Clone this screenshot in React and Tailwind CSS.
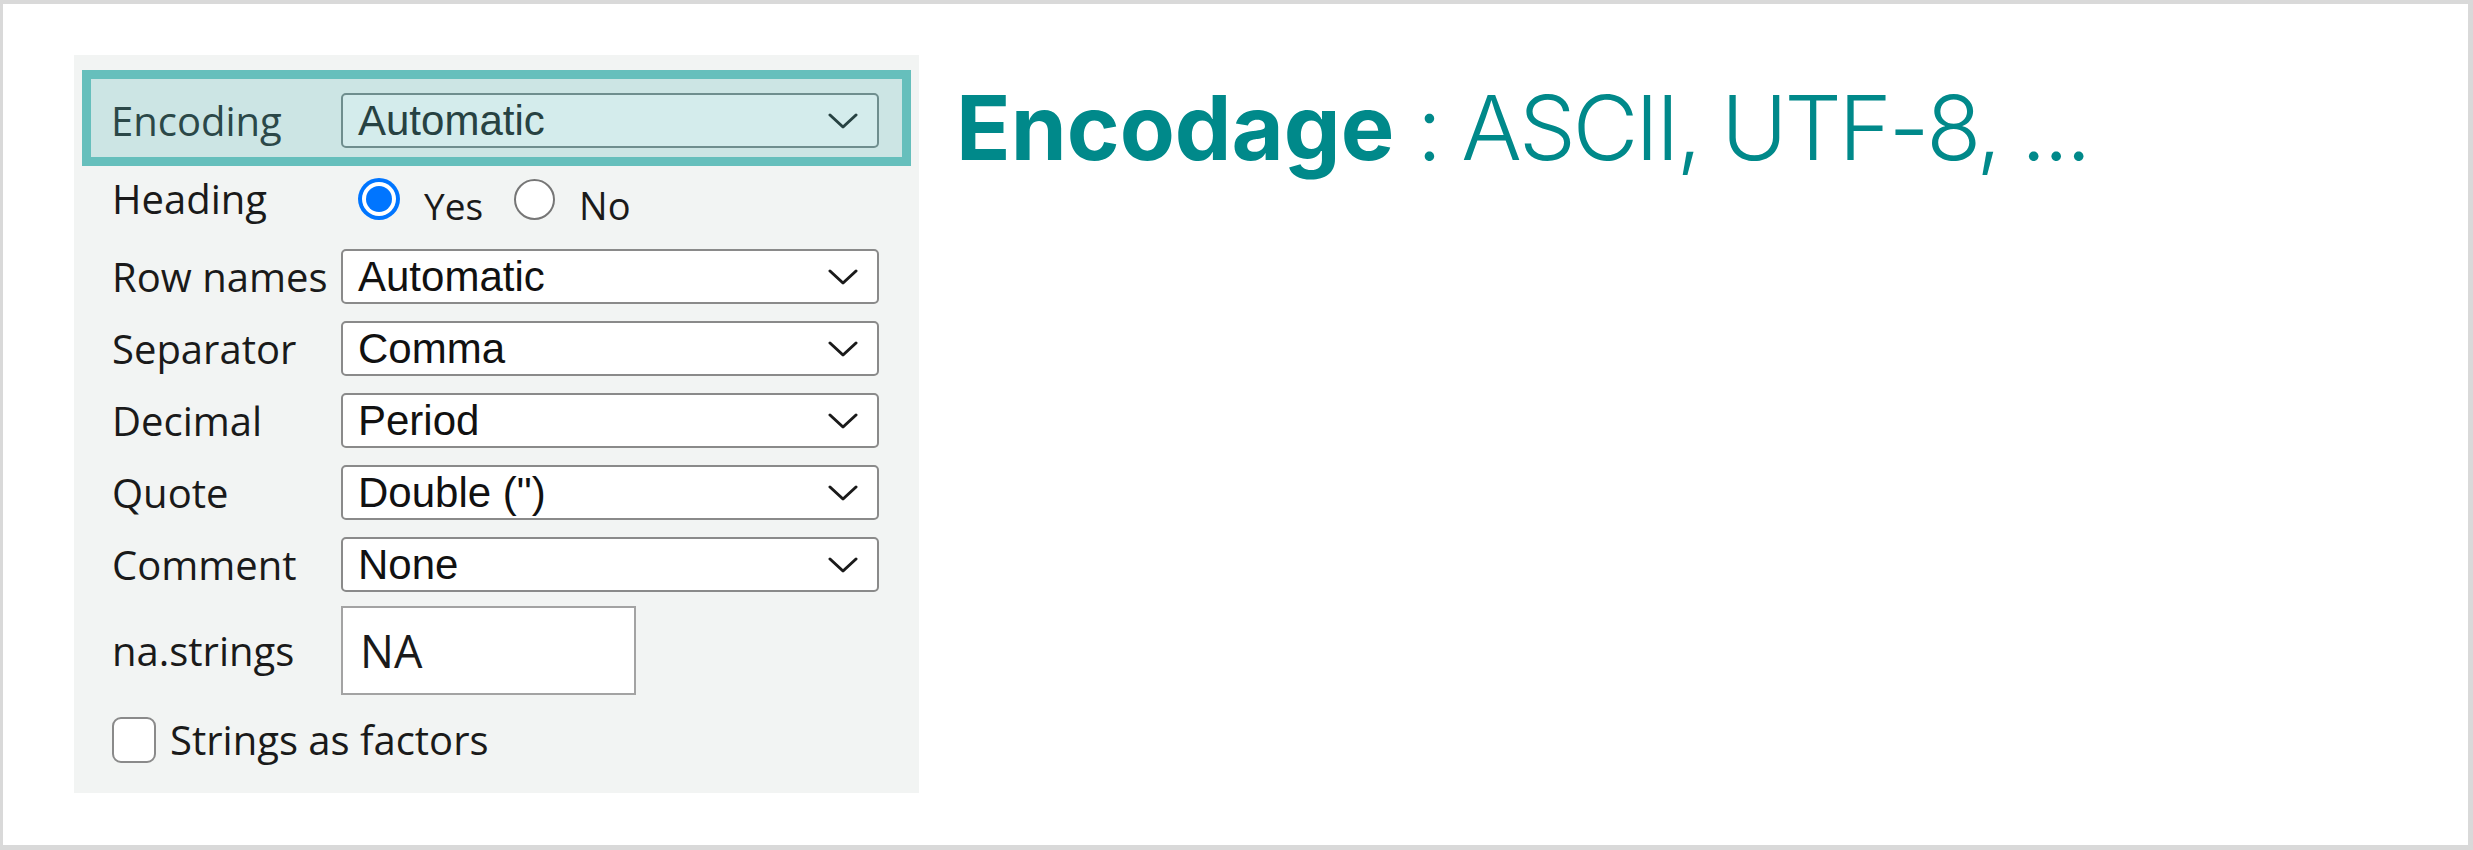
import React from "react";

const Chevron = ({ color = "#1a1a1a" }) => (
  <svg width="30" height="16" viewBox="0 0 30 16" className="shrink-0">
    <polyline points="2,2 15,14 28,2" fill="none" stroke={color} strokeWidth="3" strokeLinecap="round" strokeLinejoin="round" />
  </svg>
);

const SelectBox = ({ value, tinted }) => (
  <div
    className={`flex items-center justify-between w-[538px] h-[55px] pl-[15px] pr-[19px] rounded-[5px] border-2 ${
      tinted ? "bg-[#d4ecec] border-[#6f8e8e] text-[#274242]" : "bg-white border-[#8a8a8a] text-[#111]"
    } text-[42px] leading-none font-['Liberation_Sans',Arial,sans-serif]`}
  >
    <span>{value}</span>
    <Chevron color={tinted ? "#274242" : "#1a1a1a"} />
  </div>
);

const rows = [
  { label: "Row names", value: "Automatic" },
  { label: "Separator", value: "Comma" },
  { label: "Decimal", value: "Period" },
  { label: "Quote", value: 'Double (")' },
  { label: "Comment", value: "None" },
];

const App = () => {
  return (
    <div className="w-full h-[850px] bg-white border-t-[4px] border-l-[3px] border-r-[5px] border-b-[5px] border-[#d9d9d9] flex items-start pl-[71px] pt-[51px] font-['Open_Sans',sans-serif]">
      <div className="w-[845px] h-[738px] bg-[#f2f4f3] flex flex-col pt-[15px] px-[8px] text-[40px] text-[#1a1a1a]">
        <div className="h-[96px] border-[9px] border-[#66bfbc] bg-[#cce5e4] flex items-start pt-[14px] pl-[20px]">
          <span className="w-[230px] h-[55px] flex items-center leading-none text-[#2b4848]">Encoding</span>
          <SelectBox value="Automatic" tinted />
        </div>

        <div className="flex flex-col pl-[30px]">
          <div className="h-[66px] flex items-center">
            <span className="w-[246px] leading-none">Heading</span>
            <span className="w-[42px] h-[42px] rounded-full bg-[#0075ff] flex items-center justify-center">
              <span className="w-[34px] h-[34px] rounded-full bg-white flex items-center justify-center">
                <span className="w-[26px] h-[26px] rounded-full bg-[#0075ff]" />
              </span>
            </span>
            <span className="ml-[24px] mt-[12px] text-[37px] leading-none">Yes</span>
            <span className="ml-[31px] w-[41px] h-[41px] rounded-full border-2 border-[#767676] bg-white" />
            <span className="ml-[24px] mt-[12px] text-[38px] leading-none">No</span>
          </div>

          <div className="flex flex-col gap-[17px] mt-[17px]">
            {rows.map((r) => (
              <div key={r.label} className="flex items-center">
                <span className="w-[229px] leading-none">{r.label}</span>
                <SelectBox value={r.value} />
              </div>
            ))}
          </div>

          <div className="flex items-center mt-[14px]">
            <span className="w-[229px] leading-none">na.strings</span>
            <div className="w-[295px] h-[89px] bg-white border-2 border-[#a3a3a3] flex items-center pl-[17px] text-[45px] leading-none">
              NA
            </div>
          </div>

          <div className="flex items-center mt-[22px]">
            <span className="w-[44px] h-[46px] rounded-[9px] border-2 border-[#8a8a8a] bg-white" />
            <span className="ml-[14px] leading-none">Strings as factors</span>
          </div>
        </div>
      </div>

      <div className="ml-[37px] mt-[28px] text-[90px] leading-none text-[#00898a] font-['Inter',sans-serif] whitespace-nowrap">
        <span className="font-bold">Encodage</span>
        <span className="font-light tracking-[-3px]"> : ASCII, UTF-8, ...</span>
      </div>
    </div>
  );
};

export default App;
